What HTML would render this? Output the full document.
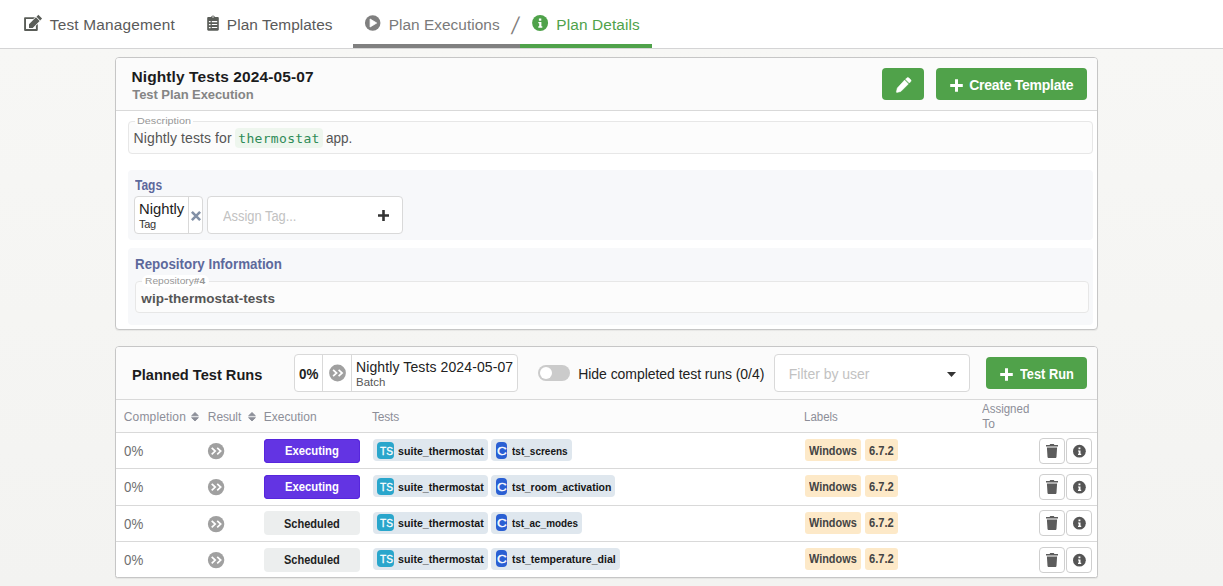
<!DOCTYPE html>
<html lang="en">
<head>
<meta charset="utf-8">
<title>Plan Details - Nightly Tests 2024-05-07</title>
<style>
*{box-sizing:border-box;}
html,body{margin:0;padding:0;}
body{width:1223px;height:586px;overflow:hidden;background:linear-gradient(to bottom,#f7f7f5 49px,#f3f3f1 586px);font-family:"Liberation Sans",sans-serif;font-size:14px;color:#222;position:relative;}
h1,h2,h3,p,button{margin:0;padding:0;font-family:inherit;}
button{border:0;cursor:pointer;}
svg{display:block;position:absolute;overflow:visible;}
.t{position:absolute;white-space:nowrap;line-height:20px;left:0;top:0;transform-origin:0 50%;}

/* ---------- top navigation ---------- */
nav{position:absolute;left:0;top:0;width:1223px;height:49px;background:#fff;border-bottom:1px solid #d4d4d5;}
nav a{position:absolute;top:0;height:48px;text-decoration:none;color:#5a5a5a;font-size:15.4px;}
nav a.cur{border-bottom:4px solid #808080;color:#7a7a7a;}
nav a.act{border-bottom:4px solid #4fa24a;color:#4fa24a;}
nav .sep{left:512.4px;top:13px;font-size:24px;line-height:26px;color:#807d7a;transform-origin:50% 50%;transform:skewX(-13deg) scaleX(.8);}

/* ---------- cards ---------- */
.card{position:absolute;left:115px;width:983px;background:#fff;border:1px solid #c6c6c6;border-radius:4px;box-shadow:0 1px 1px rgba(0,0,0,.06);}
.card>header{position:absolute;left:0;top:0;width:981px;height:53px;background:#fbfbfb;border-bottom:1px solid #d9d9d9;border-radius:3px 3px 0 0;}
.title{font-size:15.5px;font-weight:bold;color:#1b1c1d;}
.sub{font-size:13px;font-weight:bold;color:#858585;}
.btn{position:absolute;background:#50a24a;color:#fff;border-radius:4px;font-weight:bold;font-size:14px;height:32px;}

fieldset{position:absolute;margin:0;padding:0;border:1px solid #e7e7e7;border-radius:4px;background:#fcfcfc;min-width:0;}
legend{position:absolute;padding:0;height:12px;border-radius:6px;background:#fff;}
legend .t{font-size:9.5px;color:#979797;line-height:12px;}
.panel{position:absolute;left:12px;width:965px;background:#f7f8fa;border-radius:4px;}
.panel h3{font-size:14px;font-weight:bold;color:#5d699c;}
code{font-family:"DejaVu Sans Mono","Liberation Mono",monospace;}
.code{position:absolute;background:#eef6ee;border-radius:4px;}
.code code{font-size:13px;color:#2e8b57;}

.box{position:absolute;background:#fff;border:1px solid #d9d9d9;border-radius:4px;}
.box .div{position:absolute;top:0;width:1px;height:36px;background:#d9d9d9;}

/* ---------- table ---------- */
table{position:absolute;left:0;top:53px;width:981px;border-collapse:separate;border-spacing:0;table-layout:fixed;}
th,td{padding:0;position:relative;}
th{height:33px;text-align:left;font-weight:normal;font-size:12px;color:#8c8e98;background:#fcfcfc;border-bottom:1px solid #d9d9d9;}
td{height:36px;border-bottom:1px solid #d9d9d9;vertical-align:top;}
tr.r2 td{height:37px;}
tr.r4 td{height:35px;border-bottom:0;}
.pc{font-size:14px;color:#6e6e6e;}
.st{position:absolute;left:8px;top:6px;width:96px;height:24px;border-radius:4px;font-size:12px;font-weight:bold;}
.st.ex{background:#6334e3;color:#fff;box-shadow:inset 0 0 0 1px #5726dd;}
.st.sc{background:#eceeee;color:#222;}
.tl{position:absolute;top:6px;height:22px;border-radius:4px;background:#dfe7ee;font-size:11.500px;font-weight:bold;color:#161616;}
.tl i{position:absolute;top:3px;height:17px;border-radius:4px;color:#fff;font-style:normal;font-size:11px;font-weight:normal;-webkit-text-stroke:.3px #fff;}
.tl.ts{left:9px;width:115px;}
.tl.c{left:127px;}
.tl.ts i{left:4px;width:17px;background:#29a6cc;}
.tl.c i{left:5px;width:11px;background:#2a5fd3;}
.lb{position:absolute;top:6px;height:22px;border-radius:3px;background:#fde9c8;font-size:12px;font-weight:bold;color:#444;}
tr.r3 .st{top:5px;}tr.r3 .st .t{margin-top:1px;}
tr.r3 .tl i,tr.r4 .tl i{top:2px;}
tr.r3 .tl>.t,tr.r4 .tl>.t,tr.r3 .lb>.t,tr.r4 .lb>.t{margin-top:-1px;}
tr.r3 .ab{top:4px;}
.ab{position:absolute;top:5px;width:26px;height:26px;background:#fff;border:1px solid #cfcfcf;border-radius:4px;}
/*FIT*/
#n1{left:37.78px;top:14.70px;letter-spacing:0.20px}
#n2{left:32.86px;top:14.70px;letter-spacing:0.05px}
#n3{left:35.66px;top:14.70px;letter-spacing:0.04px}
#n4{left:36.35px;top:14.70px;letter-spacing:0.12px}
#t1{left:15.47px;top:9.31px;letter-spacing:0.10px}
#t2{left:16.30px;top:26.61px;letter-spacing:-0.07px}
#b1{left:33.20px;top:7.31px;letter-spacing:-0.26px}
#l1{left:2.29px;top:-0.31px;transform:scaleX(1.135)}
#d1{left:4.59px;top:6.31px;letter-spacing:0.10px}
#d2{left:3.27px;top:1.31px;letter-spacing:0.32px}
#d3{left:196.81px;top:6.31px;transform:scaleX(0.968)}
#h1{left:6.77px;top:4.81px;transform:scaleX(0.855)}
#g1{left:3.54px;top:2.00px;transform:scaleX(1.058)}
#g2{left:4.05px;top:17.00px;letter-spacing:-0.36px}
#g3{left:15.35px;top:8.91px;transform:scaleX(0.919)}
#h2{left:7.17px;top:5.50px;transform:scaleX(0.954)}
#l2{left:3.33px;top:0.20px;transform:scaleX(1.076)}
#r1{left:5.36px;top:6.91px;letter-spacing:0.04px}
#t3{left:15.50px;top:17.91px;transform:scaleX(0.942)}
#p1{left:3.51px;top:8.81px;transform:scaleX(0.958)}
#p2{left:61.03px;top:2.11px;letter-spacing:0.11px}
#p3{left:61.00px;top:17.00px;transform:scaleX(1.041)}
#p4{left:462.23px;top:16.81px;letter-spacing:-0.05px}
#p5{left:13.84px;top:8.81px;letter-spacing:-0.02px}
#b2{left:33.94px;top:6.81px;transform:scaleX(0.914)}
#c1{left:7.77px;top:7.31px;letter-spacing:0.15px}
#c2{left:7.86px;top:7.31px;letter-spacing:-0.13px}
#c3{left:7.65px;top:7.31px;letter-spacing:0.03px}
#c4{left:7.94px;top:7.31px;letter-spacing:-0.20px}
#c5{left:8.00px;top:7.31px;transform:scaleX(0.957)}
#c6{left:8.31px;top:-0.81px;transform:scaleX(0.958)}
#c7{left:8.35px;top:14.00px;letter-spacing:-0.11px}
.pc{left:8.05px;top:7.61px;transform:scaleX(0.949)}
.ext{left:21.26px;top:2.41px;transform:scaleX(0.938)}
.sct{left:19.77px;top:1.91px;transform:scaleX(0.919)}
.tst{left:2.85px;top:-1.00px;transform:scaleX(0.923)}
.sut{left:24.59px;top:2.00px;transform:scaleX(0.926)}
.tc{left:0.62px;top:-1.00px;transform:scaleX(1.221)}
#x1{left:20.80px;top:2.00px;transform:scaleX(0.871)}
#x2{left:20.80px;top:2.00px;transform:scaleX(0.909)}
#x3{left:20.80px;top:2.00px;transform:scaleX(0.861)}
#x4{left:20.80px;top:2.00px;transform:scaleX(0.917)}
.win{left:3.97px;top:2.00px;transform:scaleX(0.908)}
.ver{left:3.64px;top:2.00px;transform:scaleX(0.930)}
/*ENDFIT*/
</style>
</head>
<body>

<nav>
  <a style="left:12px;width:175px;">
    <svg style="left:12px;top:14.800px" width="19" height="17" viewBox="0 0 19 17"><path d="M1.200 2.200h9.900L9.200 4.100H2v9.900h9.900V10.800l1.900-1.900v6.100c0 .5-.4.900-.9.900H1c-.5 0-.9-.4-.9-.9V3.100c0-.5.500-.9 1.100-.9z" fill="#5a5d58"/><path d="M14.360-.14L18.040 3.540 16.200 5.380 12.520 1.700zM11.950 2.270L15.630 5.950 8.680 12.900H5V9.220z" fill="#5a5d58"/></svg>
    <span class="t" id="n1">Test Management</span>
  </a>
  <a style="left:194px;width:150px;">
    <svg style="left:13px;top:15px" width="12" height="16" viewBox="0 0 12 16"><path d="M1.400 1.900h2.700a1.950 1.950 0 0 1 3.800 0h2.700c.7 0 1.200.5 1.200 1.200v11.500c0 .7-.5 1.200-1.200 1.200H1.400c-.7 0-1.200-.5-1.200-1.200V3.100c0-.7.5-1.200 1.200-1.200z" fill="#5a5d58"/><circle cx="6" cy="2.100" r=".75" fill="#fff"/><path d="M1.900 6h1.700v1.300H1.900zm2.900.1h5.400v1.100H4.800zM1.900 8.900h1.700v1.300H1.900zm2.900.1h5.400v1.100H4.800zM1.900 11.900h1.700v1.300H1.900zm2.900.1h5.400v1.100H4.800z" fill="#fff"/></svg>
    <span class="t" id="n2">Plan Templates</span>
  </a>
  <a class="cur" style="left:353px;width:167px;">
    <svg style="left:11px;top:15px" width="17" height="17" viewBox="0 0 17 17"><circle cx="8.700" cy="8" r="7.750" fill="#7f7f7f"/><path d="M6.100 4l6.600 4-6.600 4z" fill="#fff" stroke="#fff" stroke-width=".8" stroke-linejoin="round"/></svg>
    <span class="t" id="n3">Plan Executions</span>
  </a>
  <span class="t sep">/</span>
  <a class="act" style="left:520px;width:132px;">
    <svg style="left:12px;top:15px" width="17" height="17" viewBox="0 0 17 17"><circle cx="8.100" cy="8" r="8" fill="#4fa24a"/><path d="M6.900 3.500h2.400v2.200H6.900zM6.300 6.900h3.100v4.400h.9v1.400H6.300v-1.400h.9V8.300h-.9z" fill="#fff"/></svg>
    <span class="t" id="n4">Plan Details</span>
  </a>
</nav>

<main>
<section class="card" style="top:57px;height:273px;">
  <header>
    <h1 class="t title" id="t1">Nightly Tests 2024-05-07</h1>
    <p class="t sub" id="t2">Test Plan Execution</p>
    <button class="btn" style="left:766px;top:10px;width:42px;">
      <svg style="left:14px;top:9px" width="16" height="16" viewBox="0 0 16 16"><path d="M10.800.9a1.500 1.500 0 0 1 2.100 0l1.700 1.700a1.500 1.500 0 0 1 0 2.100l-1.300 1.300-3.800-3.800zM8.600 3.100l3.800 3.800-7.600 7.600-3.800.9c-.4.100-.7-.2-.6-.6l.9-3.800z" fill="#fff" stroke="#fff" stroke-width=".5" stroke-linejoin="round"/></svg>
    </button>
    <button class="btn" style="left:820px;top:10px;width:151px;">
      <svg style="left:14px;top:10.500px" width="13" height="13" viewBox="0 0 13 13"><path d="M5 .2h3v4.800h4.800v3H8v4.800H5V8H.2V5H5z" fill="#fff"/></svg>
      <span class="t" id="b1">Create Template</span>
    </button>
  </header>

  <fieldset style="left:12px;top:63px;width:965px;height:33px;">
    <legend style="left:6px;top:-7px;width:58px;"><span class="t" id="l1">Description</span></legend>
    <p style="font-size:14px;color:#555;">
      <span class="t" id="d1">Nightly tests for</span>
      <span class="code" style="left:106px;top:6px;width:88px;height:20px;"><code class="t" id="d2">thermostat</code></span>
      <span class="t" id="d3">app.</span>
    </p>
  </fieldset>

  <div class="panel" style="top:112px;height:70px;">
    <h3 class="t" id="h1">Tags</h3>
    <div class="box" style="left:6px;top:26px;width:69px;height:38px;">
      <span class="t" id="g1" style="font-size:14px;color:#222;">Nightly</span>
      <span class="t" id="g2" style="font-size:11px;color:#333;">Tag</span>
      <span class="div" style="left:53px;"></span>
      <svg style="left:55.800px;top:13.800px" width="10" height="10" viewBox="0 0 10 10"><path d="M.9.9l8.200 8.200M9.100.9L.9 9.100" stroke="#8290a6" stroke-width="2.600" fill="none"/></svg>
    </div>
    <div class="box" style="left:79px;top:26px;width:196px;height:38px;">
      <span class="t" id="g3" style="font-size:14px;color:#c2c2c2;">Assign Tag...</span>
      <svg style="left:170px;top:13px" width="11" height="11" viewBox="0 0 11 11"><path d="M4.200 0h2.600v4.200H11v2.600H6.800V11H4.200V6.800H0V4.200h4.200z" fill="#333"/></svg>
    </div>
  </div>

  <div class="panel" style="top:190px;height:77px;">
    <h3 class="t" id="h2">Repository Information</h3>
    <fieldset style="left:7px;top:33px;width:954px;height:32px;">
      <legend style="left:6px;top:-7px;width:67px;"><span class="t" id="l2">Repository<b>#4</b></span></legend>
      <p class="t" id="r1" style="font-size:13.500px;font-weight:bold;color:#555;">wip-thermostat-tests</p>
    </fieldset>
  </div>
</section>

<section class="card" style="top:346px;height:232px;border-radius:4px 4px 2.500px 2.500px;">
  <header>
    <h2 class="t title" id="t3">Planned Test Runs</h2>
    <div class="box" style="left:178px;top:7px;width:224px;height:38px;">
      <span class="t" id="p1" style="font-size:14px;font-weight:bold;color:#222;">0%</span>
      <span class="div" style="left:27px;"></span>
      <svg style="left:34px;top:10px" width="18" height="17" viewBox="0 0 18 17"><circle cx="8.500" cy="8" r="8.400" fill="#a0a0a0"/><path d="M4.100 4.800l3.500 3.200-3.500 3.200M9.600 4.800l3.500 3.200-3.500 3.200" stroke="#fff" stroke-width="1.700" fill="none"/></svg>
      <span class="div" style="left:56px;"></span>
      <span class="t" id="p2" style="font-size:14px;color:#222;">Nightly Tests 2024-05-07</span>
      <span class="t" id="p3" style="font-size:11px;color:#555;">Batch</span>
    </div>
    <span style="position:absolute;left:422px;top:18px;width:32px;height:16px;border-radius:8px;background:#cbcbcb;"><span style="position:absolute;left:1.700px;top:1.900px;width:12.200px;height:12.200px;border-radius:7px;background:#fff;"></span></span>
    <span class="t" id="p4" style="font-size:14px;color:#222;">Hide completed test runs (0/4)</span>
    <div class="box" style="left:658px;top:7px;width:196px;height:38px;">
      <span class="t" id="p5" style="font-size:14px;color:#c2c2c2;">Filter by user</span>
      <svg style="left:172px;top:17px" width="9" height="5" viewBox="0 0 9 5"><path d="M0 0h9L4.500 5z" fill="#333"/></svg>
    </div>
    <button class="btn" style="left:870px;top:10px;width:101px;">
      <svg style="left:14px;top:10.500px" width="13" height="13" viewBox="0 0 13 13"><path d="M5 .2h3v4.800h4.800v3H8v4.800H5V8H.2V5H5z" fill="#fff"/></svg>
      <span class="t" id="b2">Test Run</span>
    </button>
  </header>

  <table>
    <colgroup><col style="width:84px"><col style="width:56px"><col style="width:108px"><col style="width:432px"><col style="width:178px"><col style="width:57px"><col style="width:66px"></colgroup>
    <thead>
      <tr>
        <th><span class="t" id="c1">Completion</span><svg style="left:75.400px;top:11.500px" width="8" height="10" viewBox="0 0 8 10"><path d="M.6 3.800L4 .5l3.400 3.300zM.6 5.700h6.800L4 9z" fill="#8c8e98" stroke="#8c8e98" stroke-width=".9" stroke-linejoin="round"/></svg></th>
        <th><span class="t" id="c2">Result</span><svg style="left:47.500px;top:11.500px" width="8" height="10" viewBox="0 0 8 10"><path d="M.6 3.800L4 .5l3.400 3.300zM.6 5.700h6.800L4 9z" fill="#8c8e98" stroke="#8c8e98" stroke-width=".9" stroke-linejoin="round"/></svg></th>
        <th><span class="t" id="c3">Execution</span></th>
        <th><span class="t" id="c4">Tests</span></th>
        <th><span class="t" id="c5">Labels</span></th>
        <th><span class="t" id="c6">Assigned</span><span class="t" id="c7">To</span></th>
        <th></th>
      </tr>
    </thead>
    <tbody>
      <tr class="r1">
        <td><span class="t pc">0%</span></td>
        <td><svg style="left:7px;top:10px" width="18" height="17" viewBox="0 0 18 17"><circle cx="9.100" cy="8.100" r="8.200" fill="#a0a0a0"/><path d="M4.700 4.900l3.500 3.200-3.500 3.200M10.200 4.900l3.500 3.200-3.500 3.200" stroke="#fff" stroke-width="1.700" fill="none"/></svg></td>
        <td><span class="st ex"><span class="t ext">Executing</span></span></td>
        <td><span class="tl ts"><i><span class="t tst">TS</span></i><span class="t sut">suite_thermostat</span></span><span class="tl c" style="width:81px;"><i><span class="t tc">C</span></i><span class="t" id="x1">tst_screens</span></span></td>
        <td><span class="lb" style="left:9px;width:56px;"><span class="t win">Windows</span></span><span class="lb" style="left:69px;width:33px;"><span class="t ver">6.7.2</span></span></td>
        <td></td>
        <td><button class="ab" style="left:8px;"><svg style="left:6px;top:5px" width="12" height="14" viewBox="0 0 12 14"><path d="M4.200 0h3.600l.6.900H12v1.700H0V.9h3.600zM.9 3.500h10.200l-.6 9.200c0 .7-.6 1.300-1.300 1.300H2.800c-.7 0-1.300-.6-1.300-1.300z" fill="#5c5c5c"/></svg></button><button class="ab" style="left:35px;"><svg style="left:5px;top:5px" width="14" height="14" viewBox="0 0 14 14"><circle cx="7.400" cy="7.200" r="6.400" fill="#555"/><path d="M6.500 3.500h1.900v1.800H6.500zM6 6.400h2.500v3.400h.7v1.200H6v-1.200h.7V7.600H6z" fill="#fff"/></svg></button></td>
      </tr>
      <tr class="r2">
        <td><span class="t pc">0%</span></td>
        <td><svg style="left:7px;top:10px" width="18" height="17" viewBox="0 0 18 17"><circle cx="9.100" cy="8.100" r="8.200" fill="#a0a0a0"/><path d="M4.700 4.900l3.500 3.200-3.500 3.200M10.200 4.900l3.500 3.200-3.500 3.200" stroke="#fff" stroke-width="1.700" fill="none"/></svg></td>
        <td><span class="st ex"><span class="t ext">Executing</span></span></td>
        <td><span class="tl ts"><i><span class="t tst">TS</span></i><span class="t sut">suite_thermostat</span></span><span class="tl c" style="width:124px;"><i><span class="t tc">C</span></i><span class="t" id="x2">tst_room_activation</span></span></td>
        <td><span class="lb" style="left:9px;width:56px;"><span class="t win">Windows</span></span><span class="lb" style="left:69px;width:33px;"><span class="t ver">6.7.2</span></span></td>
        <td></td>
        <td><button class="ab" style="left:8px;"><svg style="left:6px;top:5px" width="12" height="14" viewBox="0 0 12 14"><path d="M4.200 0h3.600l.6.900H12v1.700H0V.9h3.600zM.9 3.500h10.200l-.6 9.200c0 .7-.6 1.300-1.300 1.300H2.800c-.7 0-1.300-.6-1.300-1.300z" fill="#5c5c5c"/></svg></button><button class="ab" style="left:35px;"><svg style="left:5px;top:5px" width="14" height="14" viewBox="0 0 14 14"><circle cx="7.400" cy="7.200" r="6.400" fill="#555"/><path d="M6.500 3.500h1.900v1.800H6.500zM6 6.400h2.500v3.400h.7v1.200H6v-1.200h.7V7.600H6z" fill="#fff"/></svg></button></td>
      </tr>
      <tr class="r3">
        <td><span class="t pc">0%</span></td>
        <td><svg style="left:7px;top:10px" width="18" height="17" viewBox="0 0 18 17"><circle cx="9.100" cy="8.100" r="8.200" fill="#a0a0a0"/><path d="M4.700 4.900l3.500 3.200-3.500 3.200M10.200 4.900l3.500 3.200-3.500 3.200" stroke="#fff" stroke-width="1.700" fill="none"/></svg></td>
        <td><span class="st sc"><span class="t sct">Scheduled</span></span></td>
        <td><span class="tl ts"><i><span class="t tst">TS</span></i><span class="t sut">suite_thermostat</span></span><span class="tl c" style="width:91px;"><i><span class="t tc">C</span></i><span class="t" id="x3">tst_ac_modes</span></span></td>
        <td><span class="lb" style="left:9px;width:56px;"><span class="t win">Windows</span></span><span class="lb" style="left:69px;width:33px;"><span class="t ver">6.7.2</span></span></td>
        <td></td>
        <td><button class="ab" style="left:8px;"><svg style="left:6px;top:5px" width="12" height="14" viewBox="0 0 12 14"><path d="M4.200 0h3.600l.6.900H12v1.700H0V.9h3.600zM.9 3.500h10.200l-.6 9.200c0 .7-.6 1.300-1.300 1.300H2.800c-.7 0-1.300-.6-1.300-1.300z" fill="#5c5c5c"/></svg></button><button class="ab" style="left:35px;"><svg style="left:5px;top:5px" width="14" height="14" viewBox="0 0 14 14"><circle cx="7.400" cy="7.200" r="6.400" fill="#555"/><path d="M6.500 3.500h1.900v1.800H6.500zM6 6.400h2.500v3.400h.7v1.200H6v-1.200h.7V7.600H6z" fill="#fff"/></svg></button></td>
      </tr>
      <tr class="r4">
        <td><span class="t pc">0%</span></td>
        <td><svg style="left:7px;top:10px" width="18" height="17" viewBox="0 0 18 17"><circle cx="9.100" cy="8.100" r="8.200" fill="#a0a0a0"/><path d="M4.700 4.900l3.500 3.200-3.500 3.200M10.200 4.900l3.500 3.200-3.500 3.200" stroke="#fff" stroke-width="1.700" fill="none"/></svg></td>
        <td><span class="st sc"><span class="t sct">Scheduled</span></span></td>
        <td><span class="tl ts"><i><span class="t tst">TS</span></i><span class="t sut">suite_thermostat</span></span><span class="tl c" style="width:129px;"><i><span class="t tc">C</span></i><span class="t" id="x4">tst_temperature_dial</span></span></td>
        <td><span class="lb" style="left:9px;width:56px;"><span class="t win">Windows</span></span><span class="lb" style="left:69px;width:33px;"><span class="t ver">6.7.2</span></span></td>
        <td></td>
        <td><button class="ab" style="left:8px;"><svg style="left:6px;top:5px" width="12" height="14" viewBox="0 0 12 14"><path d="M4.200 0h3.600l.6.900H12v1.700H0V.9h3.600zM.9 3.500h10.200l-.6 9.200c0 .7-.6 1.300-1.300 1.300H2.800c-.7 0-1.300-.6-1.300-1.300z" fill="#5c5c5c"/></svg></button><button class="ab" style="left:35px;"><svg style="left:5px;top:5px" width="14" height="14" viewBox="0 0 14 14"><circle cx="7.400" cy="7.200" r="6.400" fill="#555"/><path d="M6.500 3.500h1.900v1.800H6.500zM6 6.400h2.500v3.400h.7v1.200H6v-1.200h.7V7.600H6z" fill="#fff"/></svg></button></td>
      </tr>
    </tbody>
  </table>
</section>
</main>
</body>
</html>
